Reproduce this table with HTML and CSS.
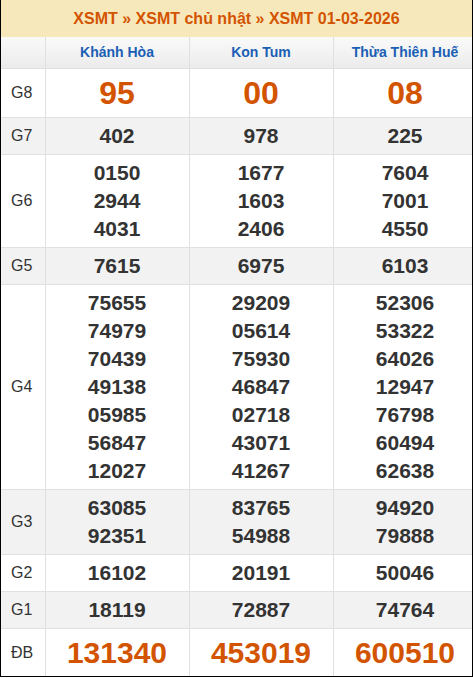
FILE: index.html
```html
<!DOCTYPE html>
<html lang="vi">
<head>
<meta charset="utf-8">
<title>XSMT 01-03-2026</title>
<link rel="stylesheet" href="styles.css">
</head>
<body>
<div class="box">
  <div class="title">XSMT » XSMT chủ nhật » XSMT 01-03-2026</div>
  <table class="kq">
    <colgroup><col class="c-lbl"><col class="c-num"><col class="c-num"><col class="c-num"></colgroup>
    <thead>
      <tr class="hd"><th></th><th>Khánh Hòa</th><th>Kon Tum</th><th>Thừa Thiên Huế</th></tr>
    </thead>
    <tbody>
      <tr class="g8"><td class="lbl">G8</td><td class="big">95</td><td class="big">00</td><td class="big">08</td></tr>
      <tr class="alt"><td class="lbl">G7</td><td>402</td><td>978</td><td>225</td></tr>
      <tr><td class="lbl">G6</td><td>0150<br>2944<br>4031</td><td>1677<br>1603<br>2406</td><td>7604<br>7001<br>4550</td></tr>
      <tr class="alt"><td class="lbl">G5</td><td>7615</td><td>6975</td><td>6103</td></tr>
      <tr><td class="lbl">G4</td><td>75655<br>74979<br>70439<br>49138<br>05985<br>56847<br>12027</td><td>29209<br>05614<br>75930<br>46847<br>02718<br>43071<br>41267</td><td>52306<br>53322<br>64026<br>12947<br>76798<br>60494<br>62638</td></tr>
      <tr class="alt"><td class="lbl">G3</td><td>63085<br>92351</td><td>83765<br>54988</td><td>94920<br>79888</td></tr>
      <tr><td class="lbl">G2</td><td>16102</td><td>20191</td><td>50046</td></tr>
      <tr class="alt"><td class="lbl">G1</td><td>18119</td><td>72887</td><td>74764</td></tr>
      <tr class="db"><td class="lbl">ĐB</td><td class="big">131340</td><td class="big">453019</td><td class="big">600510</td></tr>
    </tbody>
  </table>
</div>
</body>
</html>
```
FILE: styles.css
```css
html, body {
  margin: 0;
  padding: 0;
  background: #fff;
}
body {
  font-family: "Liberation Sans", Arial, sans-serif;
  width: 473px;
  height: 678px;
  overflow: hidden;
}
.box {
  width: 473px;
  box-sizing: border-box;
  border-left: 1px solid #000;
  border-right: 1px solid #000;
  border-bottom: 1px solid #000;
  overflow: hidden;
}
.title {
  height: 37px;
  line-height: 37px;
  background: #f7e8bc;
  color: #d35400;
  font-weight: bold;
  font-size: 16px;
  text-align: center;
}
.kq {
  width: 476px;
  border-collapse: collapse;
  table-layout: fixed;
}
.c-lbl { width: 44px; }
.c-num { width: 144px; }
.kq th, .kq td {
  border: 1px solid #e0e0e0;
  padding: 4px 0;
  text-align: center;
  vertical-align: middle;
}
.kq tr > :first-child { border-left: none; }
.kq thead th { border-top: none; }
.kq tbody tr:last-child td { border-bottom: none; }
.hd th {
  height: 23px;
  background: linear-gradient(#fafafa, #ebebeb);
  color: #1a5fb4;
  font-size: 14px;
  font-weight: bold;
  line-height: 23px;
}
.kq td {
  font-size: 21px;
  font-weight: bold;
  line-height: 28px;
  color: #333;
}
.kq td.lbl {
  font-size: 16px;
  font-weight: normal;
  text-align: left;
  padding-left: 10px;
  color: #333;
}
.alt td { background: #f2f2f2; }
.g8 td { height: 40px; }
.kq td.big {
  color: #d35400;
  font-size: 32px;
  line-height: 40px;
}
.db td { height: 39px; }
.db td.big {
  font-size: 30px;
  line-height: 39px;
}
```
